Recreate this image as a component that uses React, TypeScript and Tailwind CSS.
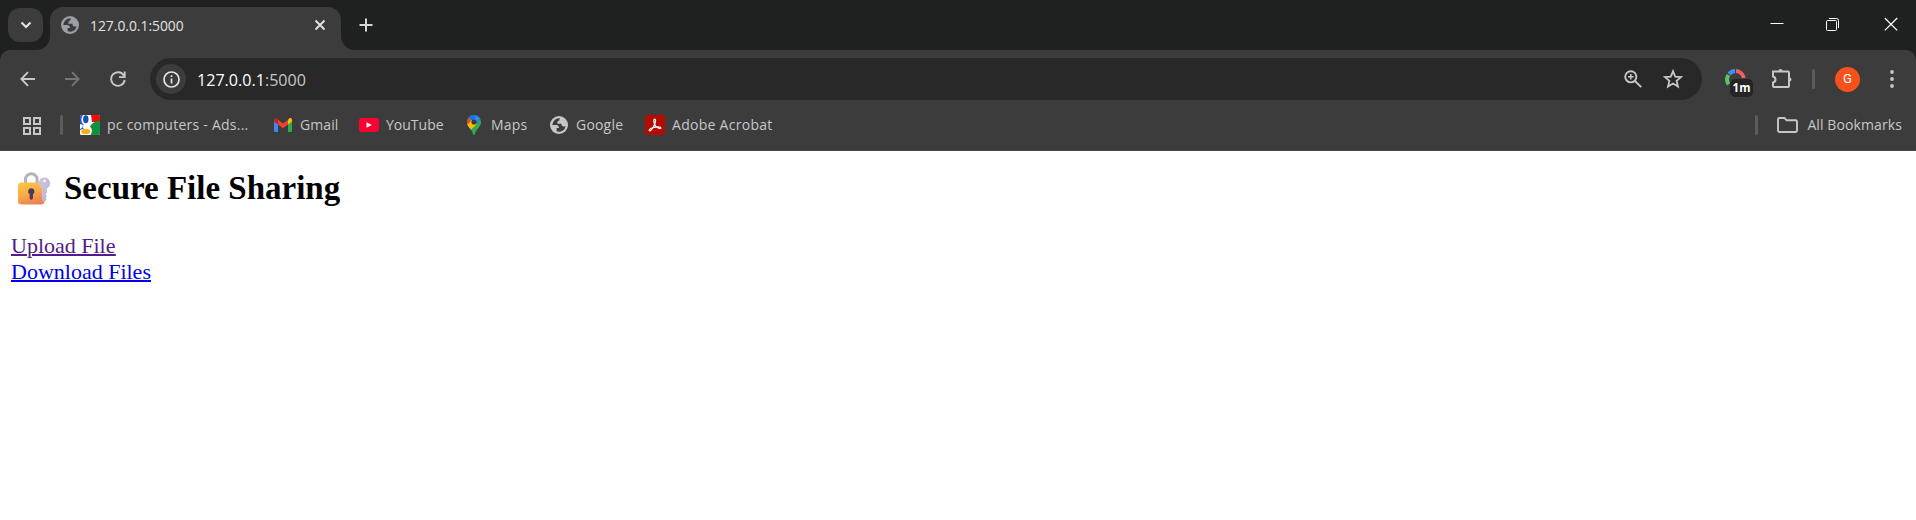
import React from "react";

const ui = "font-['Open_Sans','Noto_Sans',sans-serif]";

const Globe = ({ color, hole }: { color: string; hole: string }) => (
  <svg width="18" height="18" viewBox="0 0 16 16" className="shrink-0">
    <circle cx="8" cy="8" r="8" fill={color} />
    <path d="M2 8h3.414c1.705.013 2.563.868 2.572 2.569H5.900v3.050A6 6 0 0 0 13.974 8.560c-.355.577-.932.866-1.731.866-1.330 0-1.996-.666-1.996-1.997v-.5H6.586V5.600c0-.931.559-1.397 1.676-1.397 0-1.100.280-1.765.840-1.995A6 6 0 0 0 2 8z" fill={hole} />
  </svg>
);

const GoogleClassic = () => (
  <svg width="20" height="20" viewBox="0 0 20 20" className="shrink-0">
    <defs><clipPath id="gc"><rect width="20" height="20" rx="1.500" /></clipPath></defs>
    <g clipPath="url(#gc)">
      <rect width="20" height="20" fill="#fff" />
      <path d="M11 0h9v7h-8z" fill="#f20d0d" />
      <path d="M20 6v14h-9.500c2-3 2-6-.5-8.500C12 8 15 6 20 6z" fill="#0f9140" />
      <path d="M0 0h3C1 2 1 6 2.500 8.500L4 10c-1.800.5-1.800 3 0 3.600L0 15z" fill="#1d58c8" />
      <ellipse cx="5.800" cy="4.300" rx="2.700" ry="4" fill="#1450b4" />
      <path d="M0 9l3 1-1 3-2 1z" fill="#fff" />
      <ellipse cx="5.700" cy="16.500" rx="4.400" ry="2.700" fill="#f4ae12" />
    </g>
  </svg>
);

const Gmail = () => (
  <svg width="20" height="20" viewBox="0 0 20 20" className="shrink-0">
    <path d="M1 6v9.500A1.400 1.400 0 0 0 2.400 17H5V9z" fill="#4285f4" />
    <path d="M15 9v8h2.600a1.400 1.400 0 0 0 1.400-1.500V6z" fill="#34a853" />
    <path d="M15 4.700V9.500l4-3V5c0-2-2-2.400-3.200-1.300z" fill="#fbbc04" />
    <path d="M5 9.500V4.700l5 3.700 5-3.700v4.800l-5 3.800z" fill="#ea4335" />
    <path d="M1 5v1.500l4 3V4.700l-.8-1C2.800 2.600 1 3.200 1 5z" fill="#c5221f" />
  </svg>
);

const YouTube = () => (
  <svg width="20" height="20" viewBox="0 0 20 20" className="shrink-0">
    <rect y="3" width="20" height="14" rx="3" fill="#ff0033" />
    <path d="M7.500 7.300v5.400l5.300-2.700z" fill="#fff" />
  </svg>
);

const Maps = () => (
  <svg width="20" height="20" viewBox="0 0 20 20" className="shrink-0">
    <defs><clipPath id="pin"><path d="M10 0a7 7 0 0 0-7 7c0 5 4.500 6.500 5.800 11.500.5 1.900 1.900 1.900 2.400 0C12.500 13.500 17 12 17 7a7 7 0 0 0-7-7z" /></clipPath></defs>
    <g clipPath="url(#pin)">
      <rect width="20" height="20" fill="#34a853" />
      <path d="M2 10L8 4l5 5-8.500 8z" fill="#fbbc04" />
      <path d="M2 0v11l5-5-2.500-4z" fill="#ea4335" />
      <path d="M4.500 2.300L8 5.500 12 9l5-6-2-3H6z" fill="#1a73e8" />
      <path d="M12 1l4 2-4 5-2-2z" fill="#4285f4" />
    </g>
    <circle cx="10" cy="7" r="2.600" fill="#3c3c3c" />
  </svg>
);

const Acrobat = () => (
  <svg width="20" height="20" viewBox="0 0 20 20" className="shrink-0">
    <rect width="20" height="20" rx="3" fill="#b30b00" />
    <path d="M9.300 4.300c1.800-.6 1.400 2.600.3 5-1 2.400-3 6.200-4.700 6.500-1.600.1-.5-2.500 4-3.500 3-.7 6.800-.8 6.900.6 0 1.200-2.700.6-4.400-1C9.500 10.200 8 5 9.300 4.300z" fill="none" stroke="#fff" strokeWidth="1.200" />
  </svg>
);

const bookmarks = [
  { label: "pc computers - Ads...", icon: <GoogleClassic />, width: "w-[193px]", track: "tracking-[0.25px]" },
  { label: "Gmail", icon: <Gmail />, width: "w-[86px]", track: "tracking-[0.100px]" },
  { label: "YouTube", icon: <YouTube />, width: "w-[105px]", track: "" },
  { label: "Maps", icon: <Maps />, width: "w-[85px]", track: "tracking-[0.200px]" },
  { label: "Google", icon: <Globe color="#c4c7cc" hole="#3c3c3c" />, width: "w-[96px]", track: "tracking-[0.200px]" },
  { label: "Adobe Acrobat", icon: <Acrobat />, width: "w-[140px]", track: "tracking-[0.280px]" },
];

function TabStrip() {
  return (
    <div className="flex h-[50px] items-start bg-[#1f2120]">
      <button className="mt-2 ml-2 flex h-[34px] w-[35px] shrink-0 items-center justify-center rounded-[12px] bg-[#3c3c3c]">
        <svg width="12" height="8" viewBox="0 0 12 8" fill="none" stroke="#e3e3e3" strokeWidth="2.200"><path d="M1.500 1.500L6 6l4.500-4.500" /></svg>
      </button>
      <svg width="14" height="14" viewBox="0 0 14 14" className="-ml-[7px] mt-9 shrink-0" fill="#3c3c3c"><path d="M14 0v14H0A14 14 0 0 0 14 0z" /></svg>
      <div className="mt-[7px] flex h-[43px] w-[291px] shrink-0 items-center rounded-t-[13px] bg-[#3c3c3c] pl-[11px] pb-[7px]">
        <Globe color="#9aa0a6" hole="#3c3c3c" />
        <span className={`${ui} ml-[11px] flex-1 pt-[2px] text-[13.850px] leading-5 text-[#e3e3e3]`}>127.0.0.1:5000</span>
        <svg width="12" height="12" viewBox="0 0 12 12" className="mr-[15px]" stroke="#e3e3e3" strokeWidth="1.900"><path d="M1.500 1.500l9 9M10.500 1.500l-9 9" /></svg>
      </div>
      <svg width="14" height="14" viewBox="0 0 14 14" className="mt-9 shrink-0" fill="#3c3c3c"><path d="M0 0v14h14A14 14 0 0 1 0 0z" /></svg>
      <svg width="14" height="14" viewBox="0 0 14 14" className="mt-[18px] ml-1 shrink-0" stroke="#d6d6d6" strokeWidth="2"><path d="M7 .5v13M.5 7h13" /></svg>
      <div className="ml-auto flex pt-[17px] pr-[18px]">
        <svg width="14" height="14" viewBox="0 0 14 14" stroke="#fff" strokeWidth="1"><path d="M.5 6.500h13" /></svg>
        <svg width="14" height="14" viewBox="0 0 14 14" className="ml-[42px]" fill="none" stroke="#fff" strokeWidth="1"><rect x=".5" y="3.500" width="10" height="10" rx="1" /><path d="M3 1.500h7.500a2 2 0 0 1 2 2V11" /></svg>
        <svg width="14" height="14" viewBox="0 0 14 14" className="ml-[44px]" stroke="#fff" strokeWidth="1.200"><path d="M.8 1l12.400 12.400M13.200 1L.8 13.400" /></svg>
      </div>
    </div>
  );
}

function Toolbar() {
  return (
    <div className="flex h-[58px] items-center">
      <svg width="16" height="16" viewBox="0 0 16 16" className="ml-5 shrink-0" fill="none" stroke="#c7c7c7" strokeWidth="1.900"><path d="M15 8H1.500M8 1.200L1.400 8 8 14.800" /></svg>
      <svg width="16" height="16" viewBox="0 0 16 16" className="ml-7 shrink-0" fill="none" stroke="#757575" strokeWidth="1.900"><path d="M1 8h13.500M8 1.200L14.600 8 8 14.800" /></svg>
      <svg width="16" height="16" viewBox="0 0 16 16" className="ml-[30px] shrink-0" fill="none" stroke="#c7c7c7" strokeWidth="1.900"><path d="M13.800 4.500A6.800 6.800 0 1 0 14.700 9M14.700.5v5.600H9" /></svg>
      <div className="ml-6 flex h-[42px] w-[1552px] shrink-0 items-center rounded-full bg-[#282828] pl-[6px] pr-[19px]">
        <div className="flex size-[30px] items-center justify-center rounded-full bg-[#3c3c3c]">
          <svg width="17" height="17" viewBox="0 0 17 17" fill="none" stroke="#e3e3e3" strokeWidth="1.700"><circle cx="8.500" cy="8.500" r="7.500" /><path d="M8.500 7.500v5M8.500 4.300v1.800" /></svg>
        </div>
        <span className={`${ui} ml-[11px] flex-1 pt-[2px] text-[16.100px] leading-6 text-white`}>127.0.0.1<span className="text-[#c7c7c7]">:5000</span></span>
        <svg width="18" height="18" viewBox="0 0 18 18" className="mr-[21px]" fill="none" stroke="#c7c7c7" strokeWidth="1.900"><circle cx="6.800" cy="6.800" r="5.600" /><path d="M11 11l6.200 6.200" /><path d="M6.800 4v5.600M4 6.800h5.600" strokeWidth="1.500" /></svg>
        <svg width="20" height="20" viewBox="0 0 20 20" fill="none" stroke="#c7c7c7" strokeWidth="1.800"><path d="M10 2.200l2.200 5.400 5.800.5-4.400 3.800 1.400 5.700-5-3-5 3 1.400-5.700L2 8.100l5.800-.5z" /></svg>
      </div>
      <div className="relative ml-[22px] size-[23px] shrink-0">
        <svg width="23" height="23" viewBox="0 0 23 23" fill="none" strokeWidth="4">
          <path d="M4.600 16.300A8.400 8.400 0 0 1 4.400 7" stroke="#5bc466" />
          <path d="M5.100 6.100A8.400 8.400 0 0 1 11 3.100" stroke="#3d8ff0" />
          <path d="M12 3.100A8.400 8.400 0 0 1 19.800 10" stroke="#f5605c" />
        </svg>
        <span className="absolute left-[6px] top-[11px] flex h-[18px] w-[23px] items-center justify-center rounded-[5px] bg-[#252525] pt-px font-['Open_Sans',sans-serif] text-[11.500px] leading-none font-bold text-white">1m</span>
      </div>
      <svg width="21" height="21" viewBox="0 0 21 21" className="ml-[24px] -mt-[2px] shrink-0" fill="none" stroke="#c7c7c7" strokeWidth="2"><path d="M2 3.500h15a1 1 0 0 1 1 1V18a1 1 0 0 1-1 1H3a1 1 0 0 1-1-1v-3.500c3.300-.7 3.300-5.300 0-6z" /><path d="M7.500 3a2 2 0 0 1 4 0zM18.500 9.500a2 2 0 0 1 0 4z" fill="#c7c7c7" stroke="none" /></svg>
      <div className="ml-[20px] h-5 w-[3px] rounded bg-[#5c5c5c]" />
      <div className="ml-[20px] flex size-[25px] shrink-0 items-center justify-center rounded-full bg-[#f9511d] font-[Roboto,sans-serif] text-[13px] text-white">G</div>
      <svg width="4" height="18" viewBox="0 0 4 18" className="ml-[30px]" fill="#c7c7c7"><circle cx="2" cy="2" r="1.900" /><circle cx="2" cy="9" r="1.900" /><circle cx="2" cy="16" r="1.900" /></svg>
    </div>
  );
}

function Bookmarks() {
  return (
    <div className={`${ui} flex h-[43px] items-center border-b border-[#4b4b4b] pb-[8px] text-[14px] leading-5 text-[#c7c7c7]`}>
      <svg width="18" height="18" viewBox="0 0 18 18" className="ml-[23px] mt-px shrink-0" fill="none" stroke="#c7c7c7" strokeWidth="2"><path d="M1 1h6v6H1zM11 1h6v6h-6zM1 11h6v6H1zM11 11h6v6h-6z" /></svg>
      <div className="mr-[17px] ml-[19px] h-5 w-[3px] rounded bg-[#5c5c5c]" />
      {bookmarks.map((b) => (
        <div key={b.label} className={`flex shrink-0 items-center ${b.width}`}>
          <span className="flex w-5 justify-center">{b.icon}</span>
          <span className={`ml-[7px] whitespace-nowrap ${b.track}`}>{b.label}</span>
        </div>
      ))}
      <div className="ml-auto h-5 w-[3px] rounded bg-[#5c5c5c]" />
      <svg width="21" height="16" viewBox="0 0 21 16" className="ml-[19px]" fill="none" stroke="#c7c7c7" strokeWidth="1.900"><path d="M1 2.500A1.500 1.500 0 0 1 2.500 1h5l2.200 2.300h8.800A1.500 1.500 0 0 1 20 4.800v8.700a1.500 1.500 0 0 1-1.500 1.500h-16A1.500 1.500 0 0 1 1 13.500z" /></svg>
      <span className="mr-[14px] ml-[9px] tracking-[0.100px]">All Bookmarks</span>
    </div>
  );
}

const LockWithKey = () => (
  <svg width="34" height="34" viewBox="0 0 34 34" className="shrink-0">
    <defs>
      <linearGradient id="body" x1="0" y1="0" x2=".4" y2="1"><stop stopColor="#ffc640" /><stop offset=".55" stopColor="#f9ad48" /><stop offset="1" stopColor="#f08352" /></linearGradient>
      <linearGradient id="key" x1="0" y1="0" x2="1" y2="1"><stop stopColor="#cfc5dc" /><stop offset="1" stopColor="#c0b2d4" /></linearGradient>
    </defs>
    <path d="M8.500 13V8.500a5.800 5.800 0 0 1 11.600 0V13" fill="none" stroke="#b7b0c0" strokeWidth="3" />
    <rect x="1" y="11.500" width="26.500" height="22" rx="3.500" fill="url(#body)" />
    <path d="M14.300 17.200a3.200 3.200 0 0 0-1.700 5.900V27a1.700 1.700 0 0 0 3.400 0v-3.900a3.200 3.200 0 0 0-1.700-5.900z" fill="#4b3b58" />
    <path fillRule="evenodd" d="M27.500 6.500a5.700 5.700 0 0 0-2.700 10.700V29l2.300 2 2.700-2.200-1.200-1.800 1.300-1.700-1.300-2 1.300-1.500v-4.500A5.700 5.700 0 0 0 27.500 6.500zm0 2.300a1.300 1.300 0 1 1 0 2.600 1.300 1.300 0 0 1 0-2.600z" fill="url(#key)" />
  </svg>
);

export default function App() {
  return (
    <div className="flex h-[520px] w-[1916px] flex-col overflow-hidden bg-white">
      <TabStrip />
      <div className="bg-[#1f2120]">
        <div className="rounded-t-[10px] bg-[#3c3c3c]">
          <Toolbar />
          <Bookmarks />
        </div>
      </div>
      <main className="px-[11px] pt-[18px] font-['Liberation_Serif',serif] text-black">
        <h2 className="flex h-[38px] items-center text-[33px] leading-[38px] font-bold">
          <span className="mr-[13px] ml-[6px] flex pb-px"><LockWithKey /></span>
          Secure File Sharing
        </h2>
        <nav className="mt-[26px] flex flex-col items-start text-[22px] leading-[26px] underline decoration-2">
          <a className="text-[#551a8b] underline decoration-2" href="#upload">Upload File</a>
          <a className="text-[#0000ee] underline decoration-2" href="#download">Download Files</a>
        </nav>
      </main>
    </div>
  );
}
